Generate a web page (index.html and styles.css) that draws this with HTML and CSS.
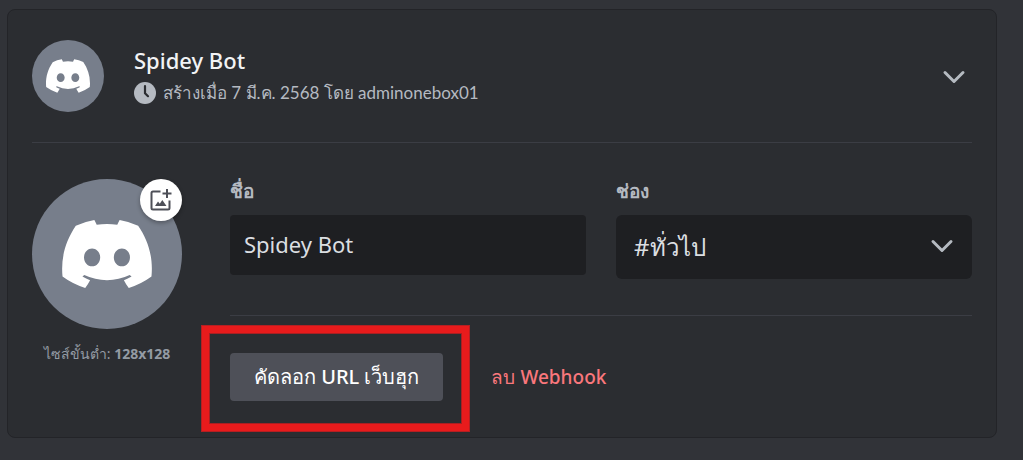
FILE: index.html
```html
<!DOCTYPE html>
<html lang="th">
<head>
<meta charset="utf-8">
<meta name="viewport" content="width=device-width, initial-scale=1">
<title>Spidey Bot</title>
<link rel="stylesheet" href="styles.css">
</head>
<body>
<svg class="defs" aria-hidden="true">
  <symbol id="logo" viewBox="0 0 127.14 96.36">
    <path d="M107.7,8.07A105.15,105.15,0,0,0,81.47,0a72.06,72.06,0,0,0-3.36,6.83A97.68,97.68,0,0,0,49,6.83,72.37,72.37,0,0,0,45.64,0,105.89,105.89,0,0,0,19.39,8.09C2.79,32.65-1.71,56.6.54,80.21h0A105.73,105.73,0,0,0,32.71,96.36,77.7,77.7,0,0,0,39.6,85.25a68.42,68.42,0,0,1-10.85-5.18c.91-.66,1.8-1.34,2.66-2a75.57,75.57,0,0,0,64.32,0c.87.71,1.76,1.39,2.66,2a68.68,68.68,0,0,1-10.87,5.19,77,77,0,0,0,6.89,11.1A105.25,105.25,0,0,0,126.6,80.22h0C129.24,52.84,122.09,29.11,107.7,8.07ZM42.45,65.69C36.18,65.69,31,60,31,53s5-12.74,11.43-12.74S54,46,53.89,53,48.84,65.69,42.45,65.69Zm42.24,0C78.41,65.69,73.25,60,73.25,53s5-12.74,11.44-12.74S96.23,46,96.12,53,91.08,65.69,84.69,65.69Z" fill="currentColor"/>
  </symbol>
  <symbol id="chevron" viewBox="0 0 24 14">
    <path d="M3 2.5 12 11.5 21 2.5" fill="none" stroke="currentColor" stroke-width="3" stroke-linecap="round" stroke-linejoin="round"/>
  </symbol>
</svg>
<main class="card">
  <header class="card-header">
    <span class="avatar avatar-small"><svg class="logo-small"><use href="#logo"/></svg></span>
    <div class="summary">
      <h1 class="name">Spidey Bot</h1>
      <p class="created">
        <svg class="clock" viewBox="0 0 22 22" aria-hidden="true"><circle cx="11" cy="11" r="11" fill="#b5bac1"/><path d="M11 4.200V11.200L14 14.200" fill="none" stroke="#2b2d31" stroke-width="2.200" stroke-linecap="round" stroke-linejoin="round"/></svg>
        <span>สร้างเมื่อ 7 มี.ค. 2568 โดย adminonebox01</span>
      </p>
    </div>
    <button class="collapse" type="button" aria-label="ย่อ"><svg class="chevron"><use href="#chevron"/></svg></button>
  </header>
  <div class="card-body">
    <div class="picture">
      <div class="picture-frame">
        <span class="avatar avatar-large"><svg class="logo-large"><use href="#logo"/></svg></span>
        <button class="upload" type="button" aria-label="อัปโหลดรูปภาพ">
          <svg class="upload-icon" viewBox="0 0 24 24" aria-hidden="true"><path d="M11.500 3.500H4Q2.500 3.500 2.500 5V20Q2.500 21.500 4 21.500H19Q20.500 21.500 20.500 20V12.500" fill="none" stroke="#4e5058" stroke-width="2"/><path d="M17 1h2v3.500h3.500v2H19V10h-2V6.500h-3.500v-2H17zM6 18 9 13.500 10.800 15.800 13.300 12 17.500 18z" fill="#4e5058"/></svg>
        </button>
      </div>
      <p class="hint">ไซส์ขั้นต่ำ: <strong>128x128</strong></p>
    </div>
    <div class="settings">
      <div class="fields">
        <div class="field">
          <label class="label" for="bot-name">ชื่อ</label>
          <input class="text-input" id="bot-name" type="text" value="Spidey Bot">
        </div>
        <div class="field">
          <label class="label" for="channel">ช่อง</label>
          <div class="select-box">
            <select class="select" id="channel"><option>#ทั่วไป</option></select>
            <svg class="chevron select-chevron"><use href="#chevron"/></svg>
          </div>
        </div>
      </div>
      <div class="actions">
        <div class="highlight"><button class="copy" type="button">คัดลอก URL เว็บฮุก</button></div>
        <button class="delete" type="button">ลบ Webhook</button>
      </div>
    </div>
  </div>
</main>
</body>
</html>
```
FILE: styles.css
```css
* {
  box-sizing: border-box;
}

body {
  margin: 0;
  padding: 9px 26px 22px 7px;
  background: #313338;
  color: #f2f3f5;
  font-family: "Noto Sans", sans-serif;
}

button,
input,
select {
  font-family: inherit;
}

button {
  padding: 0;
  border: 0;
  background: none;
  cursor: pointer;
}

h1,
p {
  margin: 0;
}

.defs {
  display: none;
}

.card {
  padding: 0 24px 36px;
  border: 1px solid #232428;
  border-radius: 8px;
  background: #2b2d31;
}

.card-header {
  display: flex;
  align-items: center;
  padding: 30px 0;
  border-bottom: 1px solid #3b3d44;
}

.avatar {
  display: flex;
  flex: none;
  align-items: center;
  justify-content: center;
  border-radius: 50%;
  background: #777e8b;
  color: #fff;
}

.avatar-small {
  width: 72px;
  height: 72px;
}

.avatar-large {
  width: 150px;
  height: 150px;
}

.logo-small {
  width: 44px;
  height: 34px;
}

.logo-large {
  width: 90px;
  height: 68px;
}

.summary {
  flex: 1;
  padding: 2px 0 0 30px;
}

.name {
  font-size: 22px;
  font-weight: 500;
  line-height: 32px;
}

.created {
  display: flex;
  align-items: center;
  gap: 7px;
  color: #b5bac1;
  font-family: Lato, "Noto Sans", sans-serif;
  font-size: 17px;
  line-height: 34px;
}

.clock {
  width: 22px;
  height: 22px;
}

.collapse {
  display: flex;
  padding: 8px 6px 6px;
  color: #b5bac1;
}

.chevron {
  width: 24px;
  height: 14px;
}

.card-body {
  display: flex;
  gap: 48px;
  padding-top: 36px;
}

.picture {
  flex: none;
  width: 150px;
}

.picture-frame {
  position: relative;
}

.upload {
  position: absolute;
  top: 0;
  right: 0;
  display: flex;
  align-items: center;
  justify-content: center;
  width: 42px;
  height: 42px;
  border-radius: 50%;
  background: #fff;
  box-shadow: 0 2px 4px rgba(0, 0, 0, 0.3);
}

.upload-icon {
  width: 24px;
  height: 24px;
}

.hint {
  margin-top: 15px;
  color: #949ba4;
  font-size: 14px;
  line-height: 20px;
  text-align: center;
}

.settings {
  flex: 1;
}

.fields {
  display: grid;
  grid-template-columns: 1fr 1fr;
  gap: 30px;
  padding-bottom: 36px;
  border-bottom: 1px solid #3b3d44;
}

.label {
  display: block;
  margin-bottom: 12px;
  color: #b5bac1;
  font-size: 19px;
  font-weight: 700;
  line-height: 24px;
}

.text-input,
.select {
  display: block;
  width: 100%;
  border: 0;
  background: #1e1f22;
  color: #dbdee1;
}

.text-input {
  height: 60px;
  padding: 0 14px 2px;
  border-radius: 4px;
  font-size: 22px;
}

.select-box {
  position: relative;
}

.select {
  height: 64px;
  padding: 0 50px 2px 18px;
  border-radius: 6px;
  font-size: 24px;
  appearance: none;
}

.select-chevron {
  position: absolute;
  top: 24px;
  right: 18px;
  color: #b5bac1;
  pointer-events: none;
}

.actions {
  display: flex;
  align-items: center;
  gap: 48px;
  padding-top: 37px;
}

.highlight {
  position: relative;
}

.highlight::after {
  position: absolute;
  inset: -28px -27px -31px -29px;
  border: 8px solid #e81b1c;
  outline: 1px solid #b51f22;
  outline-offset: -1px;
  box-shadow: inset 0 0 0 1px #a81f22;
  content: "";
  pointer-events: none;
}

.copy,
.delete {
  font-weight: 500;
  line-height: 28px;
}

.copy {
  padding: 10px 24px;
  border-radius: 4px;
  background: #4e5058;
  color: #fff;
  font-size: 20px;
}

.delete {
  color: #fa777c;
  font-size: 19px;
}
```
